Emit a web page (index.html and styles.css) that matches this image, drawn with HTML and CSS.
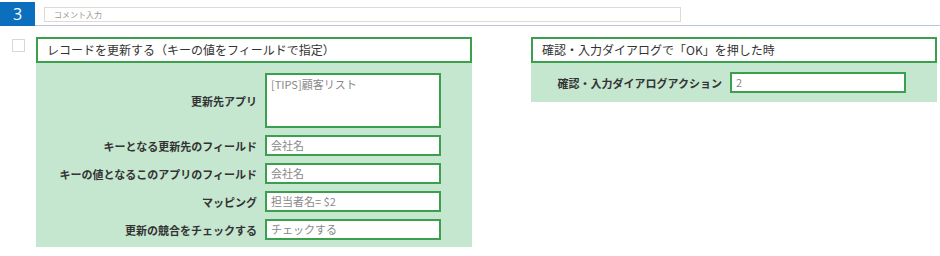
FILE: index.html
```html
<!DOCTYPE html>
<html lang="ja">
<head>
    <meta charset="UTF-8">
    <meta name="viewport" content="width=device-width, initial-scale=1.0">
    <title>アクション設定</title>
    <link rel="stylesheet" href="styles.css">
</head>
<body>
    <div class="top-bar">
        <div class="step-no">3</div>
        <div class="comment-area">
            <div class="comment-input">コメント入力</div>
        </div>
    </div>

    <div class="main-row">
        <div class="check-box"></div>

        <div class="panel panel-left">
            <div class="panel-title">レコードを更新する（キーの値をフィールドで指定）</div>
            <div class="panel-body">
                <div class="field-row">
                    <div class="field-label">更新先アプリ</div>
                    <div class="field-input field-tall">[TIPS]顧客リスト</div>
                </div>
                <div class="field-row">
                    <div class="field-label">キーとなる更新先のフィールド</div>
                    <div class="field-input">会社名</div>
                </div>
                <div class="field-row">
                    <div class="field-label">キーの値となるこのアプリのフィールド</div>
                    <div class="field-input">会社名</div>
                </div>
                <div class="field-row">
                    <div class="field-label">マッピング</div>
                    <div class="field-input">担当者名= $2</div>
                </div>
                <div class="field-row">
                    <div class="field-label">更新の競合をチェックする</div>
                    <div class="field-input">チェックする</div>
                </div>
            </div>
        </div>

        <div class="panel panel-right">
            <div class="panel-title">確認・入力ダイアログで「OK」を押した時</div>
            <div class="panel-body">
                <div class="field-row">
                    <div class="field-label">確認・入力ダイアログアクション</div>
                    <div class="field-input">2</div>
                </div>
            </div>
        </div>
    </div>
</body>
</html>
```

FILE: styles.css
```css
body{
    margin: 0;
    background-color: #ffffff;
    font-family: "Noto Sans CJK JP", "Noto Sans", sans-serif;
    color: #333333;
}

.top-bar{
    display: flex;
    padding-top: 2px;
}

.step-no{
    width: 35px;
    height: 24px;
    background-color: #0b6fbd;
    color: white;
    font-family: "Open Sans", sans-serif;
    font-size: 16px;
    line-height: 24px;
    text-align: center;
}

.comment-area{
    flex: 1;
    height: 24px;
    border-bottom: 1px solid #b9c7d8;
    padding: 5px 0 0 9px;
    box-sizing: border-box;
}

.comment-input{
    width: 637px;
    height: 15px;
    box-sizing: border-box;
    border: 1px solid #e2dad2;
    font-size: 8px;
    line-height: 13px;
    padding-left: 9px;
    color: #999999;
}

.main-row{
    display: flex;
    align-items: flex-start;
    margin-top: 11px;
}

.check-box{
    width: 13px;
    height: 13px;
    box-sizing: border-box;
    border: 1px solid #dcd7d0;
    margin: 2px 11px 0 12px;
}

.panel-left{
    width: 436px;
}

.panel-right{
    width: 406px;
    margin-left: 59px;
}

.panel-title{
    height: 26px;
    box-sizing: border-box;
    border: 2px solid #3c9f4e;
    background-color: white;
    font-size: 12px;
    line-height: 21px;
    padding-left: 9px;
    color: #333333;
}

.panel-body{
    background-color: #c5e6cf;
    display: flex;
    flex-direction: column;
    gap: 7px;
    padding: 10px 0 7px 0;
}

.panel-right .panel-body{
    padding: 9px 0 9px 0;
}

.field-row{
    display: flex;
    align-items: center;
    gap: 8px;
}

.field-label{
    width: 221px;
    text-align: right;
    font-size: 11px;
    font-weight: bold;
    color: #333333;
}

.panel-right .field-label{
    width: 191px;
}

.field-input{
    width: 176px;
    height: 21px;
    box-sizing: border-box;
    border: 2px solid #3c9f4e;
    background-color: white;
    font-size: 11px;
    line-height: 17px;
    padding-left: 4px;
    color: #888888;
}

.field-tall{
    height: 55px;
    padding-top: 1px;
}
```
